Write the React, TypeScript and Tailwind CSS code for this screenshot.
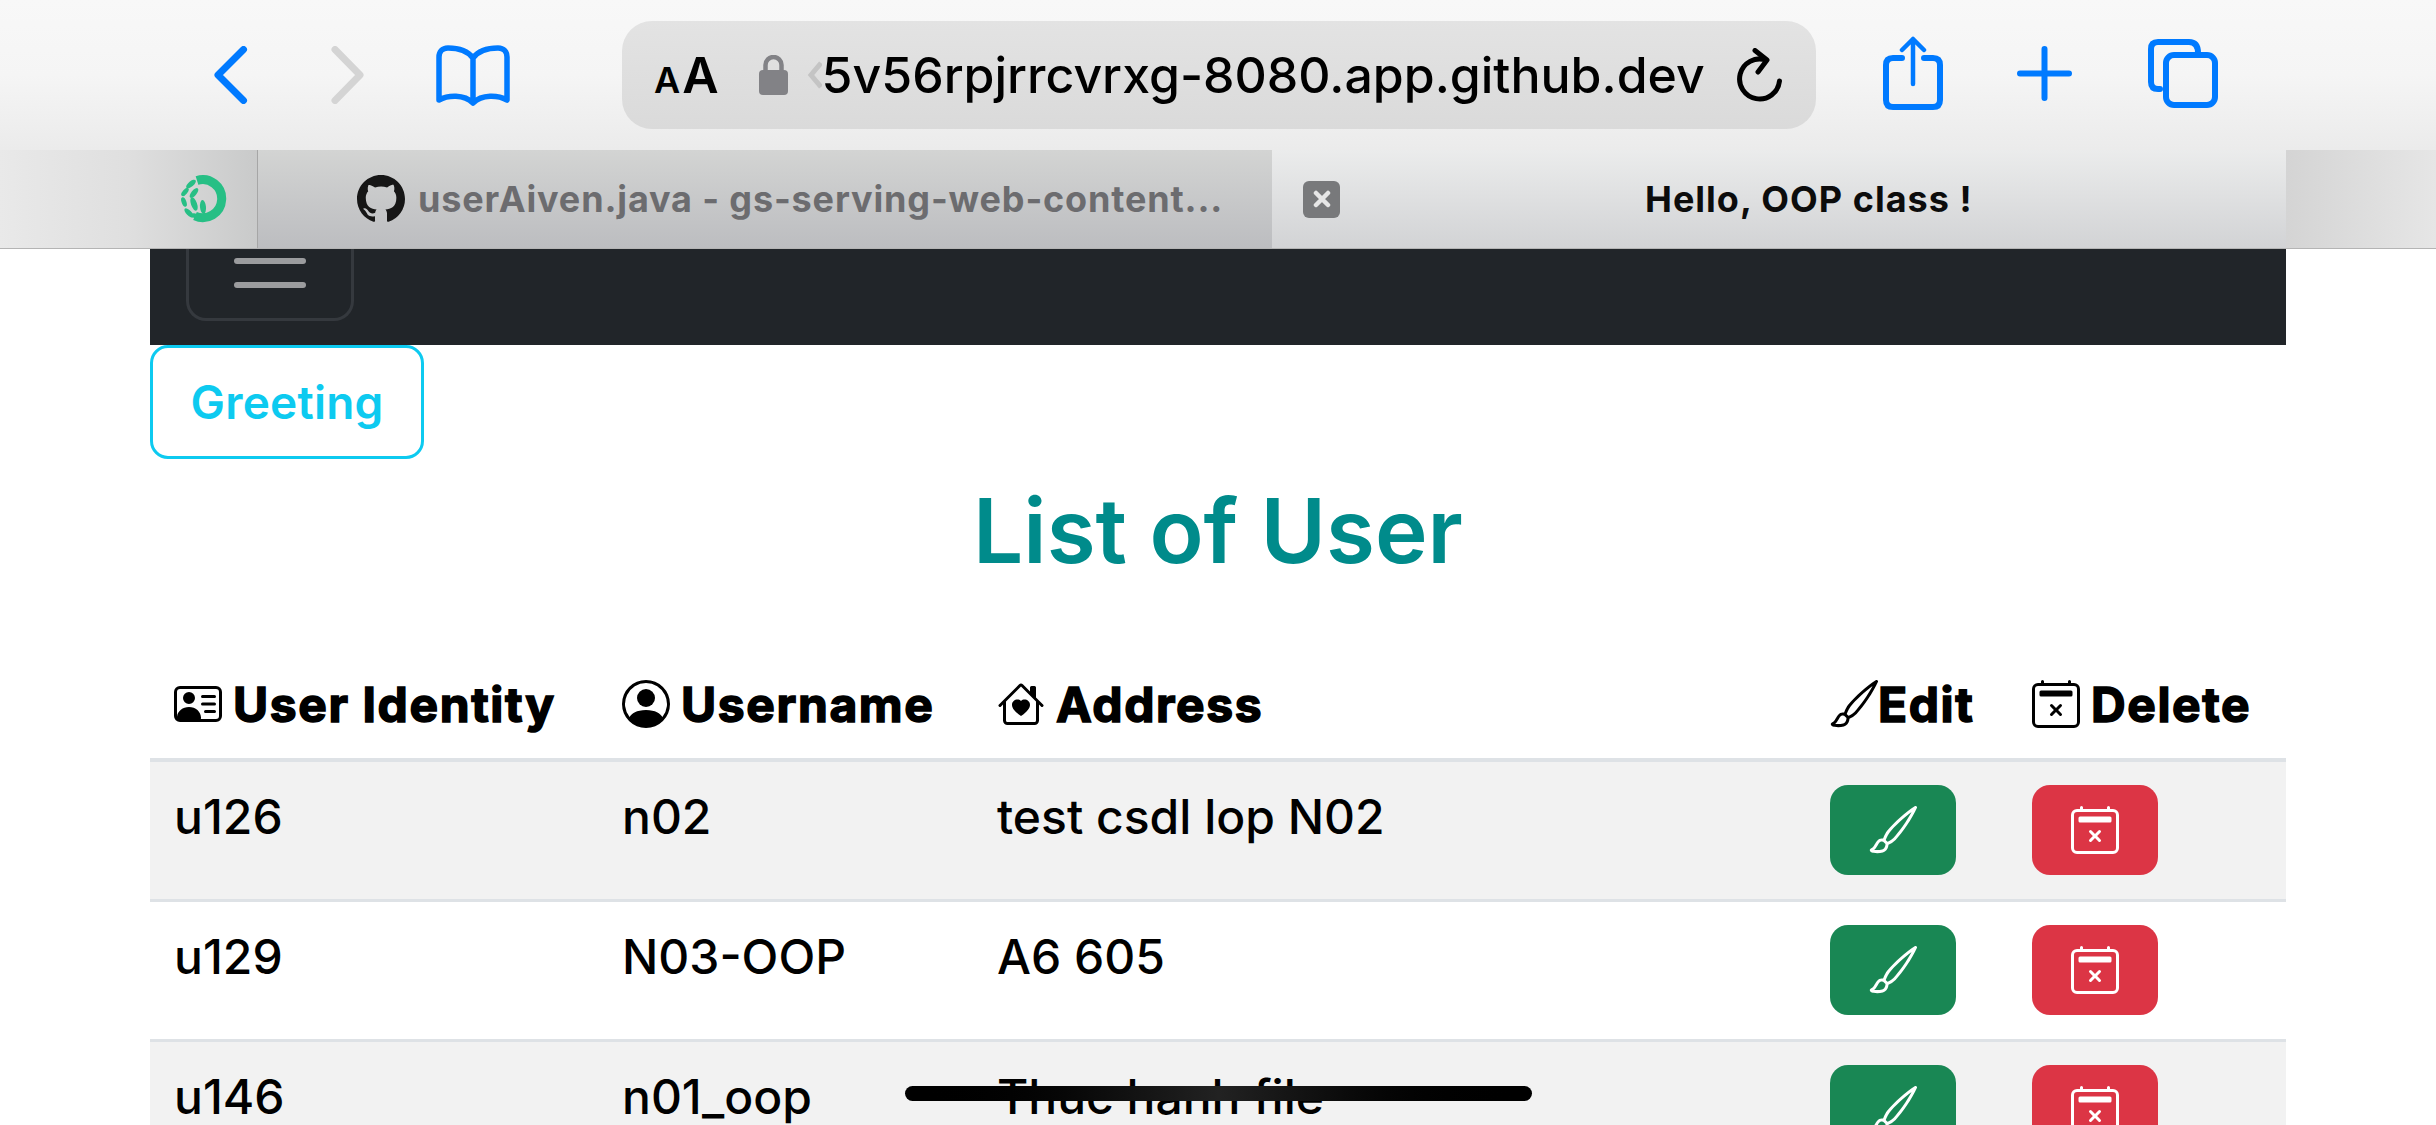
import { BsBrush, BsCalendar2X, BsGithub, BsHouseHeart, BsPersonCircle, BsPersonVcard } from 'react-icons/bs';
import type { ReactNode } from 'react';

const users = [
  { id: 'u126', name: 'n02', address: 'test csdl lop N02' },
  { id: 'u129', name: 'N03-OOP', address: 'A6 605' },
  { id: 'u146', name: 'n01_oop', address: 'Thuc hanh file' },
];

function Blue({ children, w, h }: { children: ReactNode; w: number; h: number }) {
  return (
    <svg width={w} height={h} viewBox={`0 0 ${w} ${h}`} fill="none" stroke="#007aff" strokeWidth="6" strokeLinecap="round" strokeLinejoin="round" className="shrink-0">
      {children}
    </svg>
  );
}

function Favicon() {
  return (
    <svg width={48} height={48} viewBox="0 0 48 48" fill="#27bf85">
      <path d="M17 5.5 A19 19 0 1 1 15 41" fill="none" stroke="#27bf85" strokeWidth="9" />
      <ellipse cx="11" cy="9" rx="6" ry="2.6" transform="rotate(-40 11 9)" />
      <ellipse cx="5" cy="17" rx="5" ry="2.4" transform="rotate(-50 5 17)" />
      <ellipse cx="14" cy="18" rx="6" ry="2.6" transform="rotate(-50 14 18)" />
      <ellipse cx="4" cy="27" rx="5" ry="2.4" transform="rotate(70 4 27)" />
      <ellipse cx="14" cy="29" rx="7" ry="3" transform="rotate(70 14 29)" />
      <ellipse cx="23" cy="32" rx="7" ry="3" transform="rotate(85 23 32)" />
      <ellipse cx="9" cy="38" rx="6" ry="2.6" transform="rotate(45 9 38)" />
      <ellipse cx="17" cy="42" rx="6" ry="2.6" transform="rotate(30 17 42)" />
    </svg>
  );
}

function Toolbar() {
  return (
    <div className="h-[150px] shrink-0 flex items-start bg-gradient-to-b from-[#f8f8f8] via-[#f5f5f5] to-[#ebebeb]">
      <div className="w-[622px] shrink-0 flex items-center h-[150px] pl-[214px]">
        <Blue w={34} h={58}>
          <path d="M29.5 3.5 L4 29 L29.5 54.5" strokeWidth="7" />
        </Blue>
        <svg className="ml-[83px] shrink-0" width={33} height={58} viewBox="0 0 33 58" fill="none" stroke="#d4d4d4" strokeWidth="7" strokeLinecap="round" strokeLinejoin="round">
          <path d="M4 3.5 L29 29 L4 54.5" />
        </svg>
        <div className="ml-[72px]">
          <Blue w={74} h={61}>
            <path d="M37 13 C31 5 21 3 12 3 C6 3 3 7 3 12 V55 C12 50 28 49 37 58 C46 49 62 50 71 55 V12 C71 7 68 3 62 3 C53 3 43 5 37 13 Z M37 13 V58" strokeWidth="5.5" />
          </Blue>
        </div>
      </div>
      <div className="mt-[21px] w-[1194px] h-[108px] shrink-0 rounded-[30px] bg-gradient-to-b from-[#e3e3e3] to-[#dadada] flex items-center pl-[32px]">
        <span className="font-semibold text-black leading-none flex items-baseline gap-[2px]">
          <span className="text-[36px]">A</span>
          <span className="text-[50px]">A</span>
        </span>
        <svg className="ml-[40px] shrink-0" width={29} height={40} viewBox="0 0 29 40">
          <path d="M6.5 18 V10 a8 8 0 0 1 16 0 V18" fill="none" stroke="#828286" strokeWidth="4.5" />
          <rect y="15" width="29" height="25" rx="4" fill="#828286" />
        </svg>
        <svg className="ml-[19px] shrink-0" width={15} height={30} viewBox="0 0 15 30" fill="none" stroke="#c4c4c4" strokeWidth="5">
          <path d="M14 3 L4 15 L14 27" />
        </svg>
        <span className="text-[50px] font-medium text-black leading-none whitespace-nowrap">5v56rpjrrcvrxg-8080.app.github.dev</span>
        <svg className="ml-[31px] shrink-0" width={47} height={55} viewBox="0 0 47 55" fill="none" stroke="#000" strokeWidth="5" strokeLinecap="round" strokeLinejoin="round">
          <path d="M30 12 A20 20 0 1 0 43.5 33" />
          <path d="M19 2.5 L31 12 L22 24" />
        </svg>
      </div>
      <div className="flex items-center h-[146px] pl-[67px]">
        <Blue w={60} h={74}>
          <path d="M19 22 H10 Q3 22 3 29 V64 Q3 71 10 71 H50 Q57 71 57 64 V29 Q57 22 50 22 H41" strokeWidth="6" />
          <path d="M30 48 V3 M19 14 L30 3 L41 14" strokeWidth="4.5" />
        </Blue>
        <svg className="ml-[74px] shrink-0" width={55} height={55} viewBox="0 0 55 55" fill="none" stroke="#007aff" strokeWidth="6" strokeLinecap="round">
          <path d="M27.5 3 V52 M3 27.5 H52" />
        </svg>
        <div className="ml-[76px]">
          <Blue w={70} h={69}>
            <path d="M12 50 H10 Q3 50 3 43 V10 Q3 3 10 3 H41 Q50 3 50 14" />
            <rect x="18" y="16" width="49" height="50" rx="8" />
          </Blue>
        </div>
      </div>
    </div>
  );
}

function Tabs() {
  return (
    <div className="h-[99px] shrink-0 flex border-b border-[#b4b4b4]">
      <div className="w-[258px] shrink-0 flex items-center pl-[180px] border-r border-[#a6a6a6] bg-gradient-to-r from-[#e9e9e9] via-[#dfdfdf] to-[#c9caca]">
        <Favicon />
      </div>
      <div className="w-[1014px] shrink-0 flex items-center pl-[99px] bg-gradient-to-b from-[#d3d4d3] to-[#bcbdc0]">
        <BsGithub className="text-[#161616] text-[48px] shrink-0" />
        <span className="ml-[13px] font-bold text-[36px] tracking-[0.85px] text-[#6c6c6f] whitespace-nowrap">userAiven.java - gs-serving-web-content...</span>
      </div>
      <div className="w-[1014px] shrink-0 flex items-center pl-[31px] bg-gradient-to-b from-[#ebecec] to-[#d2d3d5]">
        <div className="w-[37px] h-[37px] rounded-[6px] bg-[#78797b] flex items-center justify-center shrink-0">
          <svg width={18} height={18} viewBox="0 0 18 18" stroke="#e6e6e6" strokeWidth="4.5" strokeLinecap="round">
            <path d="M3 3 L15 15 M15 3 L3 15" />
          </svg>
        </div>
        <span className="ml-[305px] font-bold text-[36px] tracking-[1px] text-[#0c0c0c] whitespace-nowrap">Hello, OOP class !</span>
      </div>
      <div className="flex-1 bg-gradient-to-r from-[#d4d4d4] to-[#e6e6e6]" />
    </div>
  );
}

const headCell = "px-[24px] text-left whitespace-nowrap";
const headIcon = "inline-block text-[48px] mr-[11px] align-[-6px] [-webkit-text-stroke:0]";
const bodyCell = "px-[24px] pt-[31px] pb-[20px] align-top leading-[48px]";
const btnCell = "px-[24px] pt-[23px] pb-[24px] align-top";

export default function App() {
  return (
    <div className="w-[2436px] h-[1125px] relative overflow-hidden bg-white flex flex-col font-['Inter',sans-serif] text-black">
      <Toolbar />
      <Tabs />
      <main className="mx-[150px] flex-1 min-h-0">
        <nav className="h-[96px] bg-[#212529] pl-[36px]">
          <div className="w-[168px] h-[72px] border-[3px] border-t-0 border-[#35393e] rounded-b-[20px] flex flex-col items-center gap-[18px] pt-[9px]">
            <span className="w-[72px] h-[6px] rounded bg-[#9b9c9e]" />
            <span className="w-[72px] h-[6px] rounded bg-[#9b9c9e]" />
          </div>
        </nav>
        <button className="block w-[274px] h-[114px] border-[3px] border-[#0dcaf0] rounded-[18px] text-[#0dcaf0] text-[46px] tracking-[0.2px] font-semibold">Greeting</button>
        <h1 className="mt-[16px] text-center text-[#008b8b] text-[89px] font-semibold leading-[112px]">List of User</h1>
        <table className="mt-[65px] w-full table-fixed border-collapse">
          <colgroup>
            <col className="w-[448px]" />
            <col className="w-[375px]" />
            <col className="w-[833px]" />
            <col className="w-[202px]" />
            <col className="w-[278px]" />
          </colgroup>
          <thead>
            <tr className="h-[108px] border-b-4 border-[#dee2e6] text-[48px] font-black tracking-[1.6px] [-webkit-text-stroke:1.5px_black]">
              <th className={headCell}><BsPersonVcard className={headIcon} />User Identity</th>
              <th className={headCell}><BsPersonCircle className={headIcon} />Username</th>
              <th className={headCell}><BsHouseHeart className={headIcon} />Address</th>
              <th className={headCell}><BsBrush className="inline-block text-[48px] align-[-6px]" />Edit</th>
              <th className={headCell}><BsCalendar2X className={headIcon} />Delete</th>
            </tr>
          </thead>
          <tbody className="text-[48px] font-medium">
            {users.map((u, i) => (
              <tr key={u.id} className={`border-b-[3px] border-[#dee2e6] ${i % 2 === 0 ? 'bg-[#f2f2f2]' : 'bg-white'}`}>
                <td className={bodyCell}>{u.id}</td>
                <td className={bodyCell}>{u.name}</td>
                <td className={bodyCell}>{u.address}</td>
                <td className={btnCell}>
                  <button className="w-[126px] h-[90px] rounded-[18px] bg-[#198754] text-white flex items-center justify-center"><BsBrush className="text-[48px]" /></button>
                </td>
                <td className={btnCell}>
                  <button className="w-[126px] h-[90px] rounded-[18px] bg-[#dc3545] text-white flex items-center justify-center"><BsCalendar2X className="text-[48px]" /></button>
                </td>
              </tr>
            ))}
          </tbody>
        </table>
      </main>
      <div className="absolute left-[905px] top-[1086px] w-[627px] h-[15px] rounded-full bg-gradient-to-r from-black via-[#222] to-black" />
    </div>
  );
}
